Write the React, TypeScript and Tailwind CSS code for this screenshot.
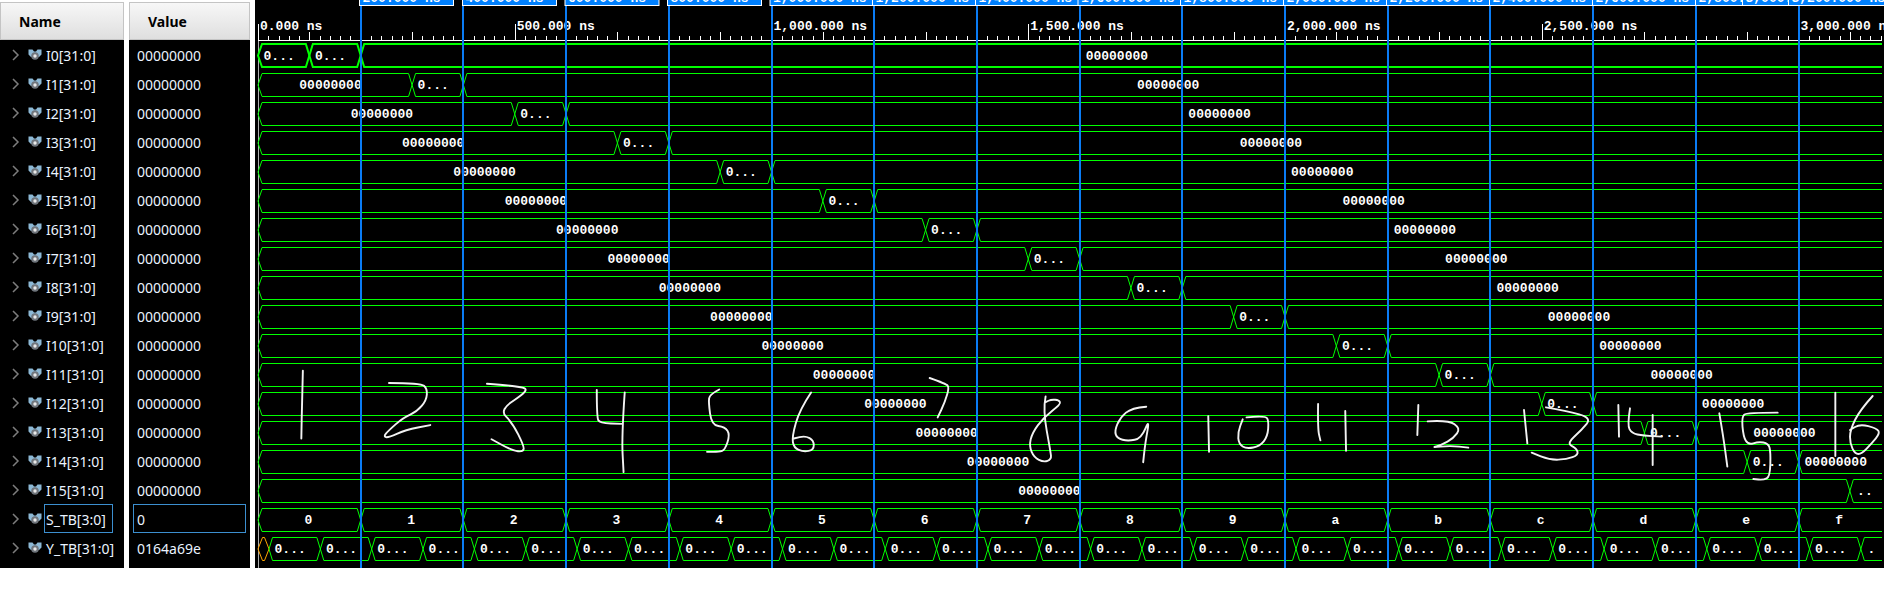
const T = 102.7;
const X0 = 258; // page x of time zero
const END = 1882;
const OX = 255; // page x of the wave panel
const px = (x: number) => x - OX;
const mono = { fontFamily: '"Liberation Mono", monospace', fontWeight: 700, fontSize: 13 } as const;

const names = [
  ...Array.from({ length: 16 }, (_, i) => `I${i}[31:0]`),
  'S_TB[3:0]',
  'Y_TB[31:0]',
];
const values = [...Array.from({ length: 16 }, () => '00000000'), '0', '0164a69e'];

type Seg = { a: number; b: number; label: string; color?: string; centerOffset?: number };

function segPath(a: number, b: number, y: number, first: boolean, last: boolean) {
  const h = 23;
  const s = 3.5;
  const mid = y + h / 2;
  if (b - a < 12) {
    const c = (a + b) / 2;
    return `M${px(a)} ${mid}L${px(c - 1)} ${y}L${px(c + 1)} ${y}L${px(b)} ${mid}L${px(c + 1)} ${y + h}L${px(c - 1)} ${y + h}Z`;
  }
  const l = first ? a + 4 : a + s;
  const r = last ? b : b - s;
  if (last) return `M${px(r)} ${y}L${px(l)} ${y}L${px(a)} ${mid}L${px(l)} ${y + h}L${px(r)} ${y + h}`;
  return `M${px(a)} ${mid}L${px(l)} ${y}L${px(r)} ${y}L${px(b)} ${mid}L${px(r)} ${y + h}L${px(l)} ${y + h}Z`;
}

function Row({ segs, y, thick }: { segs: Seg[]; y: number; thick?: boolean }) {
  return (
    <g>
      {segs.map((s, i) => {
        const last = s.b >= END;
        const cx = s.centerOffset !== undefined ? (s.a + s.b) / 2 + s.centerOffset : (s.a + s.b) / 2 - 4.5;
        return (
          <g key={i}>
            <path
              d={segPath(s.a, s.b, y + 0.5, i === 0, last)}
              fill="none"
              stroke={s.color ?? '#00ff00'}
              strokeWidth={thick ? 2 : 1}
            />
            {s.label && (
              <text x={px(cx)} y={Math.round(y) + 16} textAnchor="middle" fill="#ffffff" style={mono}>
                {s.label}
              </text>
            )}
          </g>
        );
      })}
    </g>
  );
}

function inputSegs(n: number): Seg[] {
  const t1 = X0 + T * n + T / 2;
  const t2 = X0 + T * (n + 1);
  if (n === 0) {
    return [
      { a: X0, b: t1, label: '0...' },
      { a: t1, b: t2, label: '0...' },
      { a: t2, b: END, label: '00000000' },
    ];
  }
  if (n === 15) {
    return [
      { a: X0, b: t1, label: '00000000' },
      { a: t1, b: END, label: '..', centerOffset: -1 },
    ];
  }
  return [
    { a: X0, b: t1, label: '00000000' },
    { a: t1, b: t2, label: '0...' },
    { a: t2, b: END, label: '00000000' },
  ];
}

const sSegs: Seg[] = '0123456789abcdef'.split('').map((c, i) => ({
  a: X0 + T * i,
  b: i === 15 ? END : X0 + T * (i + 1),
  label: c,
  centerOffset: -1,
}));

function ySegs(): Seg[] {
  const out: Seg[] = [{ a: X0, b: 269, label: '', color: '#ffa500' }];
  let a = 269;
  while (a < END) {
    const b = a + T / 2;
    if (b >= END) {
      out.push({ a, b: END, label: '.', centerOffset: 0 });
    } else {
      out.push({ a, b, label: '0...' });
    }
    a = b;
  }
  return out;
}

const flags: [number, number, string][] = [
  [360, 94, '200.000 ns'],
  [463, 94, '400.000 ns'],
  [565.5, 94, '600.000 ns'],
  [668, 94, '800.000 ns'],
  [770.5, 110, '1,000.000 ns'],
  [873, 110, '1,200.000 ns'],
  [976, 110, '1,400.000 ns'],
  [1078.5, 110, '1,600.000 ns'],
  [1181, 110, '1,800.000 ns'],
  [1284, 110, '2,000.000 ns'],
  [1387, 110, '2,200.000 ns'],
  [1490, 110, '2,400.000 ns'],
  [1593, 110, '2,600.000 ns'],
  [1696, 110, '2,800.000 ns'],
  [1743, 110, '3,000.000 ns'],
  [1789, 110, '3,200.000 ns'],
];

function smooth(pts: number[][]) {
  if (pts.length === 2) return `M${pts[0][0]} ${pts[0][1]}L${pts[1][0]} ${pts[1][1]}`;
  let d = `M${pts[0][0]} ${pts[0][1]}`;
  for (let i = 1; i < pts.length - 1; i++) {
    const mx = (pts[i][0] + pts[i + 1][0]) / 2;
    const my = (pts[i][1] + pts[i + 1][1]) / 2;
    d += `Q${pts[i][0]} ${pts[i][1]} ${mx} ${my}`;
  }
  const l = pts[pts.length - 1];
  return d + `L${l[0]} ${l[1]}`;
}

const S5 = 2.613;
const z5 = (p: number[]) => [260 + p[0] / S5, 360 + p[1] / S5];
const z6 = (p: number[]) => [860 + p[0] / S5, 360 + p[1] / S5];
const z4 = (p: number[]) => [1400 + p[0] / 3, 380 + p[1] / 3];

const strokes: number[][][] = [
  ...[
    [[112, 28], [110, 100], [108, 205]],
    [[337, 60], [420, 60], [437, 75], [435, 105], [410, 135], [375, 150], [335, 185], [323, 200], [335, 203], [380, 183], [445, 170]],
    [[593, 62], [680, 68], [703, 80], [625, 130], [660, 165], [690, 225], [688, 240], [660, 237], [605, 207]],
    [[880, 78], [880, 150], [888, 165], [945, 167]],
    [[953, 85], [945, 200], [950, 293]],
    [[1200, 77], [1175, 90], [1172, 110], [1180, 170], [1215, 175], [1228, 195], [1215, 235], [1200, 240], [1168, 240]],
    [[1440, 85], [1410, 130], [1390, 200], [1395, 230], [1420, 240], [1447, 235], [1447, 210], [1425, 198], [1395, 205]],
  ].map((s) => s.map(z5)),
  ...[
    [[182, 47], [225, 62], [233, 72], [222, 110], [203, 150]],
    [[485, 95], [478, 130], [498, 240], [500, 260], [480, 267], [455, 255], [442, 225], [450, 190], [480, 150], [525, 115], [520, 105], [500, 103], [485, 110]],
    [[748, 122], [710, 125], [680, 150], [665, 185], [672, 205], [700, 212], [735, 205], [757, 152], [745, 220], [740, 267]],
    [[910, 147], [912, 240]],
    [[1010, 150], [1060, 145], [1068, 160], [1065, 200], [1045, 225], [1010, 232], [990, 220], [987, 190], [1000, 155]],
    [[1197, 115], [1196, 180], [1203, 210]],
    [[1268, 133], [1270, 237]],
  ].map((s) => s.map(z6)),
  ...[
    [[55, 75], [52, 165]],
    [[83, 124], [145, 120], [182, 145], [160, 175], [125, 195], [93, 203], [150, 197], [205, 203]],
    [[372, 90], [382, 190]],
    [[438, 82], [500, 93], [575, 113], [545, 150], [500, 190], [530, 205], [535, 225], [500, 238], [450, 240], [395, 218]],
    [[655, 75], [657, 170]],
    [[690, 85], [682, 135], [695, 160], [730, 167], [785, 170]],
    [[758, 105], [758, 255]],
    [[958, 100], [970, 170], [982, 260]],
    [[1133, 98], [1040, 98], [1025, 110], [1030, 170], [1045, 195], [1075, 185], [1105, 190], [1112, 215], [1110, 290], [1090, 300], [1060, 297]],
    [[1306, 38], [1306, 228]],
    [[1418, 48], [1380, 90], [1350, 150], [1350, 190], [1365, 222], [1385, 222], [1415, 190], [1440, 160], [1430, 145], [1380, 132], [1350, 150]],
  ].map((s) => s.map(z4)),
];

function Wave() {
  const ticks = [];
  for (let i = 0; X0 + (i * T) / 10 < END; i++) {
    const x = Math.round(px(X0 + (i * T) / 10)) + 0.5;
    const h = i % 25 === 0 ? 16 : i % 10 === 5 ? 8 : 4;
    ticks.push(<line key={i} x1={x} x2={x} y1={40 - h} y2={40} stroke="#ffffff" />);
  }
  const labels = ['0.000 ns', '500.000 ns', '1,000.000 ns', '1,500.000 ns', '2,000.000 ns', '2,500.000 ns', '3,000.000 ns'];
  return (
    <svg width={1629} height={568} className="block" viewBox="0 0 1629 568">
      <rect x={0} y={0} width={1629} height={568} fill="#000000" />
      <line x1={3.5} x2={3.5} y1={24} y2={568} stroke="#b0b0b0" />
      <line x1={px(X0)} x2={px(END)} y1={40.5} y2={40.5} stroke="#ffffff" />
      {ticks}
      {labels.map((l, i) => (
        <text key={l} x={px(X0 + i * 2.5 * T) + 2} y={30} fill="#ffffff" style={mono}>
          {l}
        </text>
      ))}
      {Array.from({ length: 16 }, (_, i) => (
        <Row key={i} segs={inputSegs(i)} y={44 + 29 * i - (i === 0 ? 0.5 : 0)} thick={i === 0} />
      ))}
      <Row segs={sSegs} y={44 + 29 * 16} />
      <Row segs={ySegs()} y={44 + 29 * 17} />
      {Array.from({ length: 15 }, (_, i) => {
        const x = Math.round(px(X0 + T * (i + 1)));
        return <line key={i} x1={x} x2={x} y1={5} y2={568} stroke="#0a7cf5" strokeWidth={2} />;
      })}
      {flags.map(([x, w, l]) => (
        <g key={x}>
          <rect x={px(x) - 0.5} y={-4} width={w} height={9.5} fill="#0080ff" stroke="#ffffff" />
          <text x={px(x) + 2.5} y={2} fill="#ffffff" style={mono}>
            {l}
          </text>
        </g>
      ))}
      {strokes.map((s, i) => (
        <path
          key={i}
          d={smooth(s.map((p) => [p[0] - OX, p[1]]))}
          fill="none"
          stroke="#f2f2f2"
          strokeWidth={1.9}
          strokeLinecap="round"
          strokeLinejoin="round"
        />
      ))}
    </svg>
  );
}

function SignalIcon() {
  return (
    <svg width={14} height={12} viewBox="0 0 14 12" className="shrink-0">
      <path d="M0.5 0.5H4.5L6 2.5H8L9.5 0.5H13.5V5.5L11 8H3L0.5 5.5Z" fill="#8db9d6" />
      <circle cx={7} cy={7} r={3.8} fill="#6f757c" />
      <circle cx={7} cy={7} r={1.7} fill="#e8e8e8" />
    </svg>
  );
}

function Header({ label, pad }: { label: string; pad: string }) {
  return (
    <div
      className={`h-[38px] flex items-center ${pad} border border-[#c4c4c4] bg-gradient-to-b from-[#f7f7f7] to-[#dfdfdf] text-[14px] font-bold text-black`}
    >
      {label}
    </div>
  );
}

export default function App() {
  return (
    <div
      className="w-[1890px] h-[612px] bg-white flex items-start overflow-hidden"
      style={{ fontFamily: '"Noto Sans", "Open Sans", sans-serif' }}
    >
      <div className="w-[124px] h-[568px] pt-[2px] flex flex-col">
        <Header label="Name" pad="pl-[18px]" />
        <div className="bg-black flex-1 flex flex-col">
          {names.map((n, i) => (
            <div key={n} className="h-[29px] flex items-center text-[14px] text-[#eaf3ff]">
              <svg width={28} height={14} viewBox="0 0 28 14" className="shrink-0">
                <polyline points="13,2 18,7 13,12" fill="none" stroke="#7d7d7d" strokeWidth={1.5} />
              </svg>
              <SignalIcon />
              <div
                className={`ml-[2px] h-[29px] flex items-center pl-[1px] pr-[6px] pt-[1px] border ${i === 16 ? 'border-[#3c8fd0]' : 'border-transparent'}`}
              >
                {n}
              </div>
            </div>
          ))}
        </div>
      </div>
      <div className="w-[121px] h-[568px] ml-[5px] pt-[2px] flex flex-col">
        <Header label="Value" pad="pl-[18px]" />
        <div className="bg-black flex-1 flex flex-col">
          {values.map((v, i) => (
            <div key={i} className="h-[29px] pl-[4px] pr-[4px] text-[14px] text-[#eaf3ff]">
              <div
                className={`h-[29px] flex items-center pl-[3px] pt-[1px] border ${i === 16 ? 'border-[#3c8fd0]' : 'border-transparent'}`}
              >
                {v}
              </div>
            </div>
          ))}
        </div>
      </div>
      <div className="ml-[5px] w-[1629px] h-[568px] overflow-hidden">
        <Wave />
      </div>
    </div>
  );
}
